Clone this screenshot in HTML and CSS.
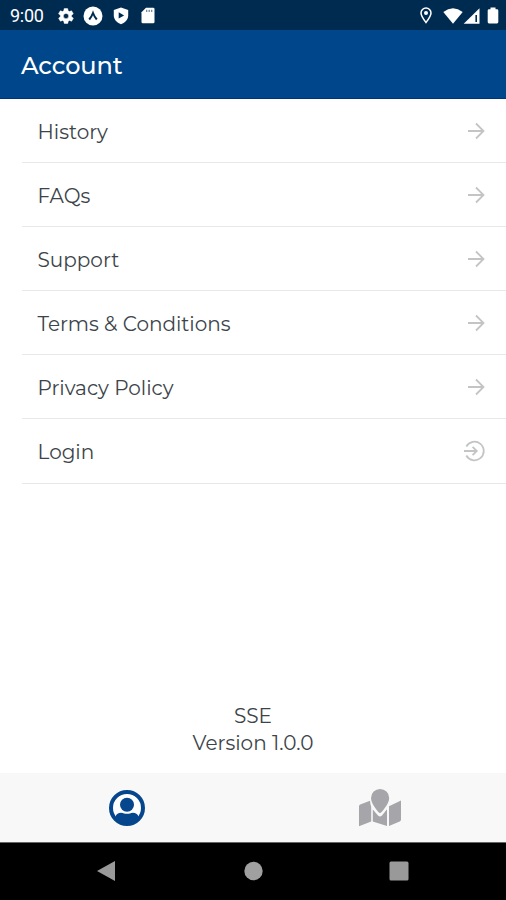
FILE: index.html
```html
<!DOCTYPE html>
<html lang="en">
<head>
<meta charset="utf-8">
<title>Account</title>
<link rel="stylesheet" href="styles.css">
</head>
<body>
<div class="status">
  <span class="time">9:00</span>
  <svg class="gear" width="18" height="18" viewBox="0 0 24 24"><path fill="#fff" stroke="#fff" stroke-width=".6" fill-rule="evenodd" d="M19.4 13a7.500 7.500 0 0 0 0-2l2.100-1.600a.5.500 0 0 0 .1-.6l-2-3.500a.5.500 0 0 0-.6-.2l-2.500 1a7.300 7.300 0 0 0-1.700-1l-.4-2.600a.5.500 0 0 0-.5-.5h-4a.5.500 0 0 0-.5.500L9 5.100a7.300 7.300 0 0 0-1.700 1l-2.500-1a.5.500 0 0 0-.6.200l-2 3.500a.5.500 0 0 0 .1.600L4.500 11a7.500 7.500 0 0 0 0 2l-2.100 1.600a.5.500 0 0 0-.1.600l2 3.500c.1.200.4.300.6.200l2.500-1a7.300 7.300 0 0 0 1.700 1l.4 2.600c0 .3.200.5.500.5h4c.3 0 .5-.2.500-.5l.4-2.600a7.300 7.300 0 0 0 1.700-1l2.500 1c.2.100.5 0 .6-.2l2-3.500a.5.500 0 0 0-.1-.6zM12 15.500a3.500 3.500 0 1 1 0-7 3.500 3.500 0 0 1 0 7z"/></svg>
  <svg class="expo" width="20" height="20" viewBox="0 0 20 20"><circle cx="10" cy="10" r="9.500" fill="#fff"/><path d="M6.200 13.500Q8.700 10.500 10 7Q11.300 10.500 13.800 13.500" fill="none" stroke="#002b50" stroke-width="2"/></svg>
  <svg class="shield" width="16" height="18" viewBox="0 0 16 18"><path fill="#fff" d="M8 .5 15.200 3v5.500c0 4-2.900 7.200-7.200 8.800C3.700 15.700.8 12.500.8 8.500V3z"/><path fill="#002b50" d="M5.700 5.300v6.200l5.400-3.100z"/></svg>
  <svg class="card" width="14" height="17" viewBox="0 0 14 17"><path fill="#fff" d="M5 .7h7.200q1.300 0 1.300 1.300v13q0 1.300-1.300 1.300H1.800Q.5 16.300.5 15V5.200z"/><path stroke="#002b50" stroke-width="1.200" d="M5.700 2.700v2.300M8.200 2.700v2.300M10.700 2.700v2.300" opacity=".6"/></svg>
  <svg class="pin" width="12" height="17" viewBox="0 0 12 17"><path fill="none" stroke="#fff" stroke-width="1.500" d="M6 15.500C3.200 11.800 1 9 1 6a5 5 0 0 1 10 0c0 3-2.200 5.800-5 9.500z"/><circle cx="6" cy="6" r="2" fill="#fff"/></svg>
  <svg class="wifi" width="20" height="16" viewBox="0 0 20 16"><path fill="#fff" d="M.3 4Q10-3.300 19.700 4L10 15.700z"/></svg>
  <svg class="signal" width="17" height="16" viewBox="0 0 17 16"><path fill="#fff" d="M16.500.3v15.400H.7z"/><path stroke="#002b50" stroke-width="1.600" d="M13.200 7v7"/></svg>
  <svg class="battery" width="12" height="17" viewBox="0 0 12 17"><path fill="#fff" d="M3.500.5h5v1.700H10q1.300 0 1.300 1.300v11.600q0 1.300-1.300 1.300H2Q.7 16.400.7 15.100V3.500q0-1.300 1.300-1.300h1.500z"/></svg>
</div>
<header class="header"><h1 class="title">Account</h1></header>
<main class="main">
  <ul class="list">
    <li class="row"><span class="label">History</span><svg class="arrow" width="18" height="18" viewBox="0 0 18 18"><path d="M1 9h15M9 1.500 16.500 9 9 16.500"/></svg></li>
    <li class="row"><span class="label">FAQs</span><svg class="arrow" width="18" height="18" viewBox="0 0 18 18"><path d="M1 9h15M9 1.500 16.500 9 9 16.500"/></svg></li>
    <li class="row"><span class="label">Support</span><svg class="arrow" width="18" height="18" viewBox="0 0 18 18"><path d="M1 9h15M9 1.500 16.500 9 9 16.500"/></svg></li>
    <li class="row"><span class="label">Terms &amp; Conditions</span><svg class="arrow" width="18" height="18" viewBox="0 0 18 18"><path d="M1 9h15M9 1.500 16.500 9 9 16.500"/></svg></li>
    <li class="row"><span class="label">Privacy Policy</span><svg class="arrow" width="18" height="18" viewBox="0 0 18 18"><path d="M1 9h15M9 1.500 16.500 9 9 16.500"/></svg></li>
    <li class="row"><span class="label">Login</span><svg class="arrow" width="22" height="22" viewBox="0 0 22 22"><path d="M3.300 6.500a9.300 9.300 0 1 1 0 9M1 11h12.500M9.600 6.800 13.800 11l-4.200 4.200"/></svg></li>
  </ul>
  <div class="about"><div class="app">SSE</div><div class="version">Version 1.0.0</div></div>
</main>
<nav class="tabs">
  <div class="tab"><svg width="38" height="38" viewBox="0 0 38 38"><circle cx="19" cy="19" r="16" fill="#fff" stroke="#05468c" stroke-width="4"/><circle cx="19" cy="15.700" r="7" fill="#05468c"/><path fill="#05468c" d="M7.500 30v-2.500q1.500-3.700 5.500-3.700 2 0 3 .6 3 .9 6 0 1-.6 3-.6 4 0 5.500 3.700V30q-4.500 5-11.500 5T7.500 30z"/></svg></div>
  <div class="tab"><svg width="44" height="40" viewBox="0 0 44 40"><g fill="#a5a5aa"><path d="M1 18.300Q1 17 2.200 16.500L12 12.700q.2 3.200 1.200 6v14.800L1 38.200z"/><path d="M14.800 21.500 20 27.500q2 2 4 0l5-6.200V38L14.800 33.500z"/><path d="M31 18.200 43 12.500v19q0 1.500-1.300 2L31 38z"/><path d="M22 25.200c-1 0-9-9.200-9-15.200a9.100 9.100 0 0 1 18.200 0c0 6-8.200 15.200-9.200 15.200z"/></g></svg></div>
</nav>
<div class="system">
  <svg width="20" height="22" viewBox="0 0 20 22"><path fill="#999" d="M19 1v20L1 11z"/></svg>
  <svg width="20" height="20" viewBox="0 0 20 20"><circle cx="10.500" cy="10" r="9.200" fill="#a0a0a0"/></svg>
  <svg width="20" height="20" viewBox="0 0 20 20"><rect x=".5" y=".5" width="19" height="19" rx="1.500" fill="#999"/></svg>
</div>
</body>
</html>
```
FILE: styles.css
```css
* { box-sizing: border-box; }
body { margin: 0; height: 900px; display: flex; flex-direction: column; background: #fff; color: #3c4449; font-family: Montserrat, Inter, "Liberation Sans", sans-serif; overflow: hidden; }
svg { display: block; flex: none; }
.status { height: 30px; flex: none; display: flex; align-items: center; background: #002b50; padding: 1px 7px 0 10px; }
.time { width: 47px; color: #fff; font: 18px/20px Roboto, sans-serif; letter-spacing: -0.3px; }
.expo { margin-left: 8px; }
.shield { margin-left: 10px; }
.card { margin-left: 12px; }
.pin { margin-left: auto; }
.wifi { margin-left: 11px; }
.signal { margin-left: 0; }
.battery { margin-left: 7px; }
.header { height: 69px; flex: none; display: flex; align-items: center; padding: 4px 21px 0; background: #00468a; border-bottom: 1px solid #003378; }
.title { margin: 0; color: #fff; font-size: 24px; font-weight: 500; line-height: 30px; letter-spacing: -0.1px; }
.main { flex: 1; display: flex; flex-direction: column; }
.list { margin: 0 0 0 22px; padding: 0; list-style: none; }
.row { height: 64.1px; display: flex; align-items: center; justify-content: space-between; padding: 0 21px 0 15.5px; border-bottom: 1px solid #e6e8e9; }
.label { padding-top: 2px; font-size: 20px; line-height: 26px; }
.arrow { fill: none; stroke: #c3c4c5; stroke-width: 1.8; }
.about { margin-top: auto; padding-bottom: 17px; text-align: center; font-size: 20px; line-height: 26.5px; }
.tabs { height: 69px; flex: none; display: flex; background: #f8f8f8; }
.tab { flex: 1; display: flex; align-items: center; justify-content: center; }
.system { height: 58px; flex: none; display: flex; align-items: center; justify-content: space-between; padding: 0 97px 2px 96px; background: #000; border-top: 1px solid #666; }
```
